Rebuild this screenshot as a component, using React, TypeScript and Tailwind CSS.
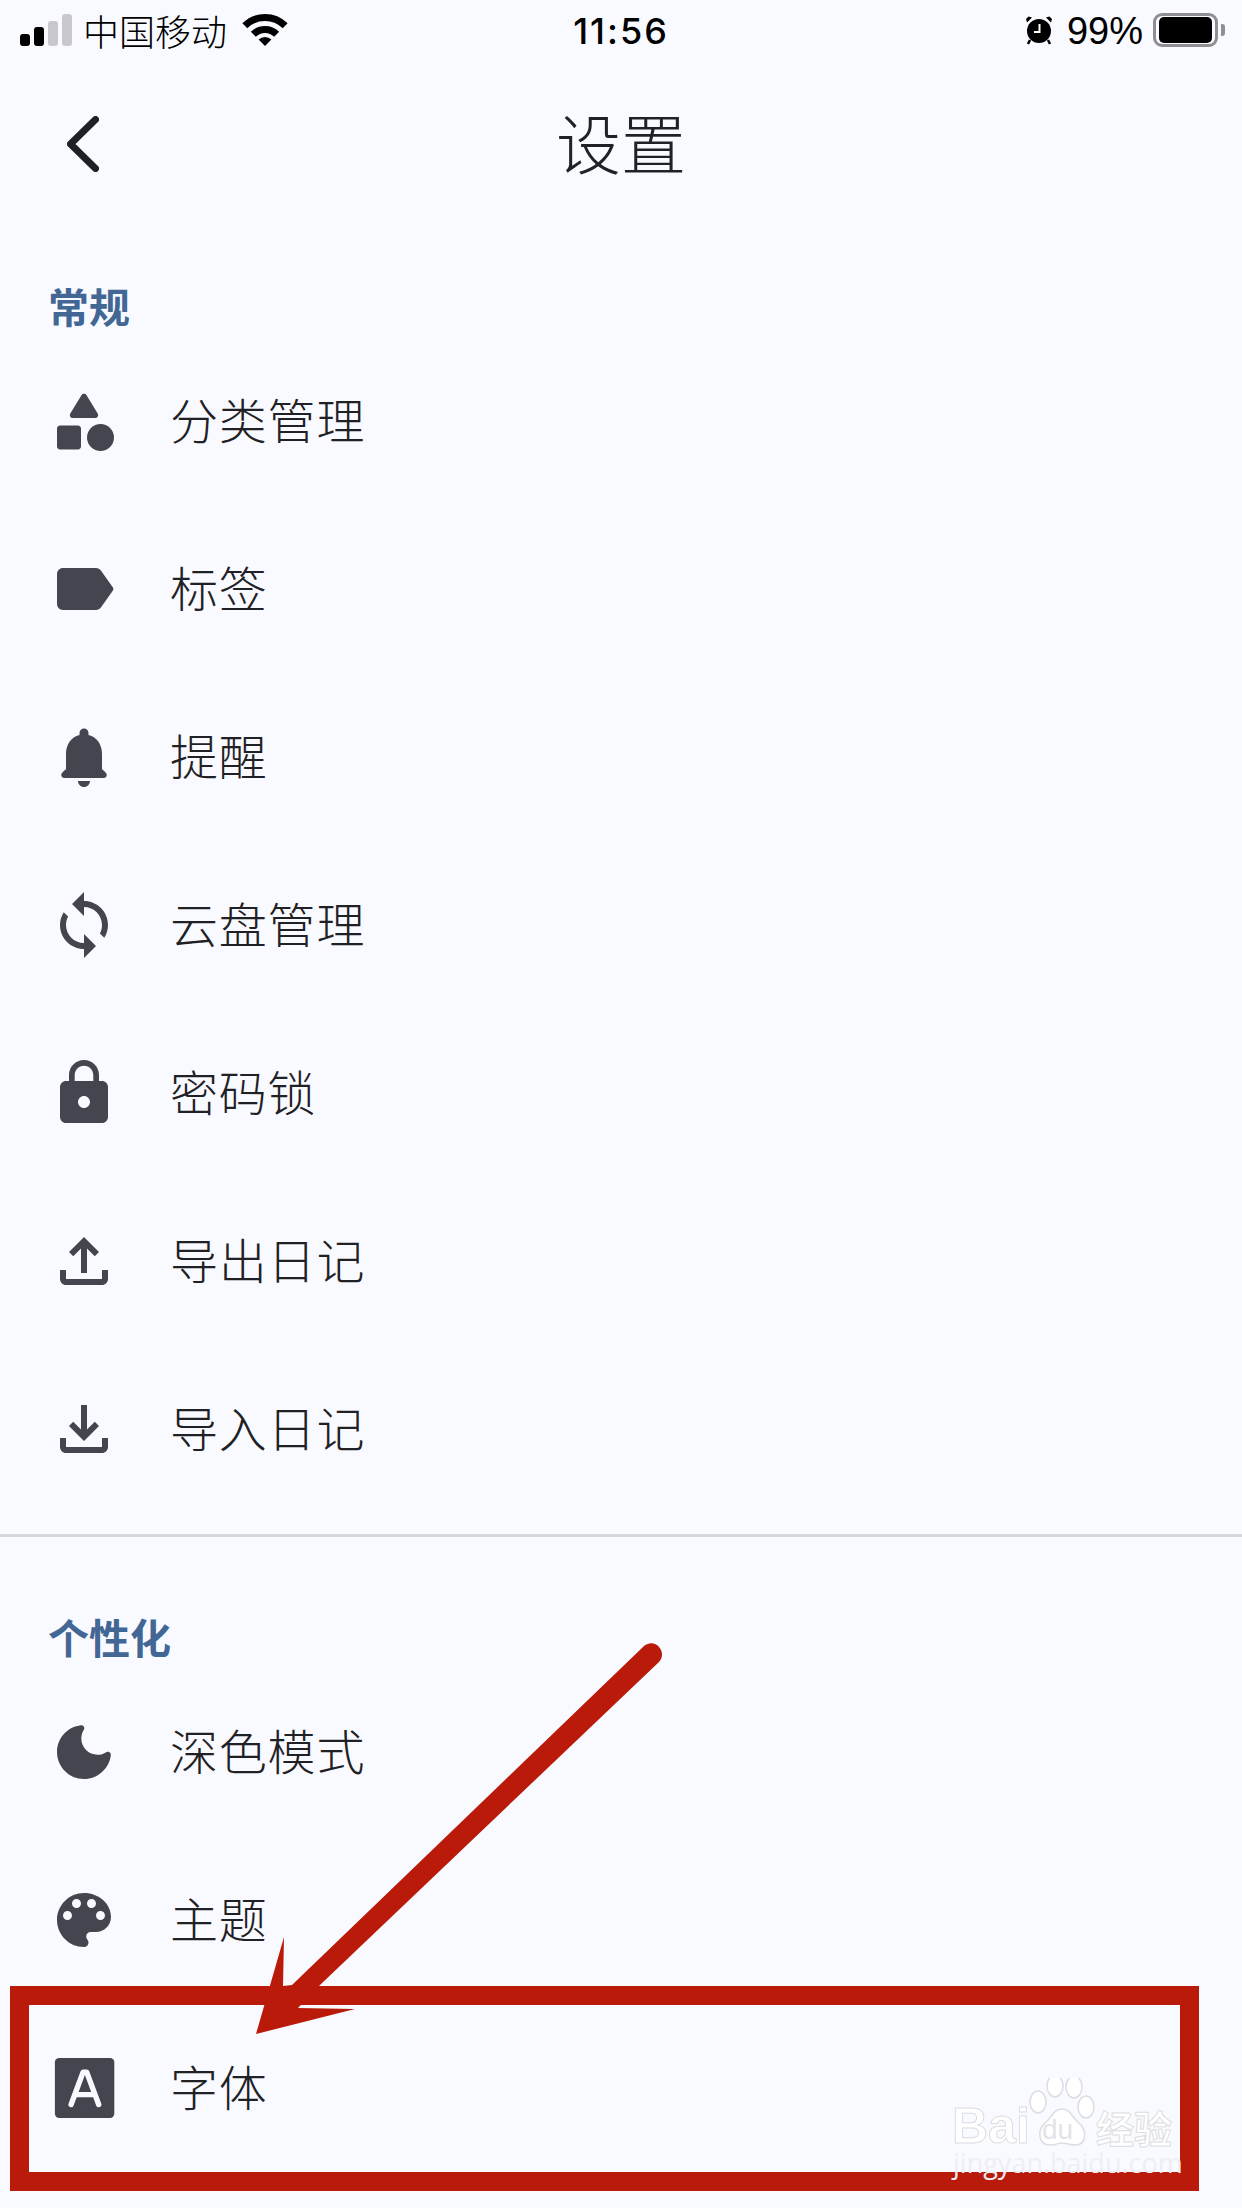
import React from "react";

const ICON = "#43464e";
const P: Record<string, React.ReactNode> = {
  category: (
    <>
      <path d="M11.15 3.4L7.43 9.48c-.41.66.07 1.52.85 1.52h7.43c.78 0 1.26-.86.85-1.52L12.85 3.4c-.39-.64-1.31-.64-1.7 0z" />
      <circle cx="17.5" cy="17.5" r="4.5" />
      <path d="M4 21.5h6c.55 0 1-.45 1-1v-6c0-.55-.45-1-1-1H4c-.55 0-1 .45-1 1v6c0 .55.45 1 1 1z" />
    </>
  ),
  label: <path d="M17.63 5.84C17.27 5.33 16.67 5 16 5L5 5.01C3.9 5.01 3 5.9 3 7v10c0 1.1.9 1.99 2 1.99L16 19c.67 0 1.27-.33 1.63-.84l3.96-5.58c.25-.35.25-.81 0-1.16l-3.96-5.57z" />,
  bell: <path d="M12 22c1.1 0 2-.9 2-2h-4c0 1.1.9 2 2 2zm6-6v-5c0-3.07-1.63-5.64-4.5-6.32V4c0-.83-.67-1.5-1.5-1.5s-1.5.67-1.5 1.5v.68C7.64 5.36 6 7.92 6 11v5l-1.29 1.29c-.63.63-.19 1.71.7 1.71h13.17c.89 0 1.34-1.08.71-1.71L18 16z" />,
  sync: <path d="M12 4V1L8 5l4 4V6c3.31 0 6 2.69 6 6 0 1.01-.25 1.97-.7 2.8l1.46 1.46C19.54 15.03 20 13.57 20 12c0-4.42-3.58-8-8-8zm0 14c-3.31 0-6-2.69-6-6 0-1.01.25-1.97.7-2.8L5.24 7.74C4.46 8.97 4 10.43 4 12c0 4.42 3.58 8 8 8v3l4-4-4-4v3z" />,
  lock: <path d="M18 8h-1V6c0-2.76-2.24-5-5-5S7 3.24 7 6v2H6c-1.1 0-2 .9-2 2v10c0 1.1.9 2 2 2h12c1.1 0 2-.9 2-2V10c0-1.1-.9-2-2-2zm-6 9c-1.1 0-2-.9-2-2s.9-2 2-2 2 .9 2 2-.9 2-2 2zm3.1-9H8.9V6c0-1.71 1.39-3.1 3.1-3.1 1.71 0 3.1 1.39 3.1 3.1v2z" />,
  upload: <path d="M18 15v3H6v-3H4v3c0 1.1.9 2 2 2h12c1.1 0 2-.9 2-2v-3h-2zM7 9l1.41 1.41L11 7.83V16h2V7.83l2.59 2.58L17 9l-5-5-5 5z" />,
  download: <path d="M18 15v3H6v-3H4v3c0 1.1.9 2 2 2h12c1.1 0 2-.9 2-2v-3h-2zm-1-4l-1.41-1.41L13 12.17V4h-2v8.17L8.41 9.59 7 11l5 5 5-5z" />,
  moon: <path d="M11.01 3.05C6.51 3.54 3 7.36 3 12c0 4.97 4.03 9 9 9 4.63 0 8.45-3.5 8.95-8 .09-.79-.78-1.42-1.54-.95-.84.54-1.84.85-2.91.85-2.98 0-5.4-2.42-5.4-5.4 0-1.06.31-2.06.84-2.94.47-.81-.19-1.59-.93-1.51z" />,
  palette: <path d="M12 3c-4.97 0-9 4.03-9 9s4.03 9 9 9c.83 0 1.5-.67 1.5-1.5 0-.39-.15-.74-.39-1.01-.23-.26-.38-.61-.38-.99 0-.83.67-1.5 1.5-1.5H16c2.76 0 5-2.24 5-5 0-4.42-4.03-8-9-8zm-5.5 9c-.83 0-1.5-.67-1.5-1.5S5.67 9 6.5 9 8 9.67 8 10.5 7.33 12 6.5 12zm3-4C8.67 8 8 7.33 8 6.5S8.67 5 9.5 5s1.5.67 1.5 1.5S10.33 8 9.5 8zm5 0c-.83 0-1.5-.67-1.5-1.5S13.67 5 14.5 5s1.5.67 1.5 1.5S15.33 8 14.5 8zm3 4c-.83 0-1.5-.67-1.5-1.5S16.67 9 17.5 9s1.5.67 1.5 1.5-.67 1.5-1.5 1.5z" />,
  font: (
    <>
      <rect x="2.3" y="2" width="19.8" height="20" rx="1.4" />
      <path d="M7.7 17.5 11.7 6.7h1.2l4 10.8M9.3 14.2h6" fill="none" stroke="#f9faff" strokeWidth="1.8" strokeLinecap="round" strokeLinejoin="round" />
    </>
  ),
};

function Row({ icon, text }: { icon: string; text: string }) {
  return (
    <div className="flex h-[168px] items-center pl-[48px]">
      <svg viewBox="0 0 24 24" className="h-[72px] w-[72px] shrink-0" fill={ICON}>
        {P[icon]}
      </svg>
      <span className="ml-[50px] pb-[7px] text-[48px] font-light leading-none tracking-[0.8px] text-[#1f2125]">{text}</span>
    </div>
  );
}

function Section({ children }: { children: string }) {
  return (
    <div className="flex h-[56px] items-center pl-[48px] text-[41px] font-bold leading-none text-[#426794]">
      {children}
    </div>
  );
}

function StatusBar() {
  return (
    <div className="grid h-[60px] grid-cols-[1fr_auto_1fr] items-center text-black">
      <div className="flex items-center pl-[20px]">
        <div className="flex items-end gap-[4px]">
          <div className="h-[12px] w-[10px] rounded-[3px] bg-black" />
          <div className="h-[19px] w-[10px] rounded-[3px] bg-black" />
          <div className="h-[25px] w-[10px] rounded-[3px] bg-[#c7c7cc]" />
          <div className="h-[32px] w-[10px] rounded-[3px] bg-[#c7c7cc]" />
        </div>
        <span className="ml-[11px] text-[36px] font-light leading-none">中国移动</span>
        <svg viewBox="0 0 46 33" className="ml-[15px] h-[33px] w-[46px]" fill="none" stroke="#000" strokeWidth="7">
          <path d="M2.85 11.85A28.5 28.5 0 0 1 43.15 11.85" />
          <path d="M11.33 20.33A16.5 16.5 0 0 1 34.67 20.33" />
          <path d="M23 32 16.6 25.6A9 9 0 0 1 29.4 25.6Z" fill="#000" stroke="none" />
        </svg>
      </div>
      <span className="pt-[2px] font-['Inter',sans-serif] text-[36px] font-medium leading-none tracking-[2px]">11:56</span>
      <div className="flex items-center justify-end pr-[17px]">
        <svg viewBox="0 0 28 30" className="h-[30px] w-[28px]">
          <circle cx="14" cy="16" r="12" fill="#000" />
          <path d="M2 7.5 7 2.5 3.5 1.5 1 4ZM26 7.5 21 2.5 24.5 1.5 27 4Z" fill="#000" />
          <path d="M5 25 3 29M23 25 25 29" stroke="#000" strokeWidth="2.5" />
          <path d="M14.5 9v8H9" fill="none" stroke="#fff" strokeWidth="2" />
        </svg>
        <span className="ml-[14px] pt-[2px] font-['Liberation_Sans',sans-serif] text-[38px] leading-none">99%</span>
        <div className="ml-[10px] flex items-center">
          <div className="flex h-[34px] w-[65px] items-center justify-center rounded-[9px] border-[3px] border-[#8e8e93]">
            <div className="h-[26px] w-[53px] rounded-[5px] bg-black" />
          </div>
          <div className="ml-[3px] h-[12px] w-[4px] rounded-r-[3px] bg-[#8e8e93]" />
        </div>
      </div>
    </div>
  );
}

function Header() {
  return (
    <div className="relative flex h-[168px] items-center justify-center">
      <svg viewBox="0 0 32 56" className="absolute left-[67px] top-[56px] h-[56px] w-[32px]" fill="none" stroke="#1e2024" strokeWidth="7" strokeLinecap="round" strokeLinejoin="round">
        <path d="M28.5 3.5 3.5 28 28.5 52.5" />
      </svg>
      <span className="pb-[5px] text-[65px] font-light leading-none text-[#1f2125]">设置</span>
    </div>
  );
}

function Watermark() {
  return (
    <div className="absolute left-[950px] top-[2070px] h-[120px] w-[230px]">
      <span className="absolute left-[2px] top-[31px] font-['Liberation_Sans',sans-serif] text-[50px] font-bold leading-none text-white [-webkit-text-stroke:1px_#dcdde2]">
        Bai
      </span>
      <svg viewBox="0 0 80 85" className="absolute left-[78px] top-[8px] h-[85px] w-[80px]" fill="#fff" stroke="#dcdde2" strokeWidth="1.5">
        <ellipse cx="10" cy="24" rx="8" ry="11" />
        <ellipse cx="27" cy="8" rx="8" ry="11" />
        <ellipse cx="46" cy="9" rx="8" ry="11" />
        <ellipse cx="58" cy="29" rx="8" ry="11" />
        <path d="M34 31c-8 0-10 8-17 14-8 7-7 22 5 22 6 0 8-2 12-2s7 2 13 2c12 0 12-15 4-22-7-6-9-14-17-14z" />
      </svg>
      <span className="absolute left-[92px] top-[46px] font-['Liberation_Sans',sans-serif] text-[28px] leading-none text-[#e2e3e8]">du</span>
      <span className="absolute left-[146px] top-[38px] text-[38px] font-bold leading-none text-white [-webkit-text-stroke:1px_#dcdde2]">经验</span>
      <span className="absolute left-[3px] top-[79px] whitespace-nowrap font-['Open_Sans',sans-serif] text-[27px] leading-none text-[#eeeef3]">
        jingyan.baidu.com
      </span>
    </div>
  );
}

export default function App() {
  return (
    <div className="relative h-[2208px] w-[1242px] overflow-hidden bg-[#f9faff] font-['Noto_Sans_CJK_SC','Noto_Sans',sans-serif]">
      <StatusBar />
      <Header />
      <div className="mt-[49px] mb-[4px]">
        <Section>常规</Section>
      </div>
      <Row icon="category" text="分类管理" />
      <Row icon="label" text="标签" />
      <Row icon="bell" text="提醒" />
      <Row icon="sync" text="云盘管理" />
      <Row icon="lock" text="密码锁" />
      <Row icon="upload" text="导出日记" />
      <Row icon="download" text="导入日记" />
      <div className="mt-[21px] h-[3px] bg-[#d6d7da]" />
      <div className="mt-[71px] mb-[4px]">
        <Section>个性化</Section>
      </div>
      <Row icon="moon" text="深色模式" />
      <Row icon="palette" text="主题" />
      <Row icon="font" text="字体" />

      <div className="absolute left-[10px] top-[1986px] h-[205px] w-[1189px] border-[19px] border-[#ba1a09]" />
      <svg viewBox="0 0 1242 2208" className="absolute left-0 top-0 h-[2208px] w-[1242px]" fill="#ba1a09">
        <path d="M256 2034 284 1937 283 1986 292 1985 643 1647C648 1642 655 1642 659 1647 663 1651 663 1658 659 1662L320 1985 298 2008 355 2009Z" />
      </svg>
      <Watermark />
    </div>
  );
}
